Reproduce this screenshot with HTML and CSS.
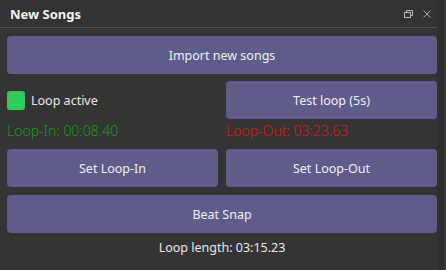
FILE: index.html
```html
<!DOCTYPE html>
<html lang="en">
<head>
    <meta charset="UTF-8">
    <title>New Songs</title>
    <link rel="stylesheet" href="styles.css">
</head>
<body>

<div class="dock">
    <div class="dock-title">
        <span>New Songs</span>
        <div class="dock-icons">
            <svg width="9" height="8" viewBox="0 0 9 8"><rect x="0.5" y="2.5" width="6" height="5" fill="none" stroke="#bbb"/><path d="M2.5 2.5V0.5h6v5h-2" fill="none" stroke="#bbb"/></svg>
            <svg width="8" height="8" viewBox="0 0 8 8"><path d="M0.5 0.5l7 7M7.5 0.5l-7 7" stroke="#aaa" stroke-width="1"/></svg>
        </div>
    </div>
    <div class="dock-body">
        <button class="btn wide">Import new songs</button>

        <label class="check">
            <span class="box"></span>
            Loop active
        </label>
        <button class="btn">Test loop (5s)</button>

        <div class="time in">Loop-In: 00:08.40</div>
        <div class="time out">Loop-Out: 03:23.63</div>

        <button class="btn">Set Loop-In</button>
        <button class="btn">Set Loop-Out</button>

        <button class="btn wide">Beat Snap</button>

        <div class="length">Loop length: 03:15.23</div>
    </div>
</div>

</body>
</html>
```

FILE: styles.css
```css
body {
    margin: 0;
    background-color: #383838;
    font-family: "Noto Sans", "Open Sans", sans-serif;
    color: #e8e8e8;
}
.dock {
    width: 444px;
    height: 270px;
    background-color: #343434;
    box-sizing: border-box;
    border-right: 7px solid #2f2f2f;
}
.dock-title {
    height: 27px;
    display: flex;
    align-items: center;
    justify-content: space-between;
    padding: 0 10px 0 10px;
    border-bottom: 1px solid #505050;
    background-color: #333;
    font-weight: bold;
    font-size: 13px;
    color: #f2f2f2;
}
.dock-icons {
    display: flex;
    align-items: center;
    gap: 10px;
    margin-right: -4px;
}
.dock-body {
    display: grid;
    grid-template-columns: 1fr 1fr;
    column-gap: 8px;
    padding: 8px 0 0 7px;
}
.btn {
    height: 38px;
    border: none;
    border-radius: 4px;
    background-color: #5f5b8b;
    color: #f0f0f0;
    font-family: inherit;
    font-size: 12.5px;
    padding: 0;
}
.wide {
    grid-column: 1 / 3;
}
.dock-body > .btn:first-child {
    margin-bottom: 7px;
}
.check {
    display: flex;
    align-items: center;
    gap: 6px;
    font-size: 12.5px;
}
.box {
    width: 18px;
    height: 19px;
    border-radius: 3px;
    background-color: #2dcc5e;
}
.time {
    height: 30px;
    line-height: 24px;
    font-size: 14px;
    font-weight: 300;
}
.time.in {
    color: #1b9a1b;
}
.time.out {
    color: #e01515;
}
.dock-body > .btn:nth-child(5),
.dock-body > .btn:nth-child(6) {
    margin-bottom: 8px;
}
.length {
    grid-column: 1 / 3;
    text-align: center;
    font-size: 12.5px;
    padding-top: 6px;
}
```
